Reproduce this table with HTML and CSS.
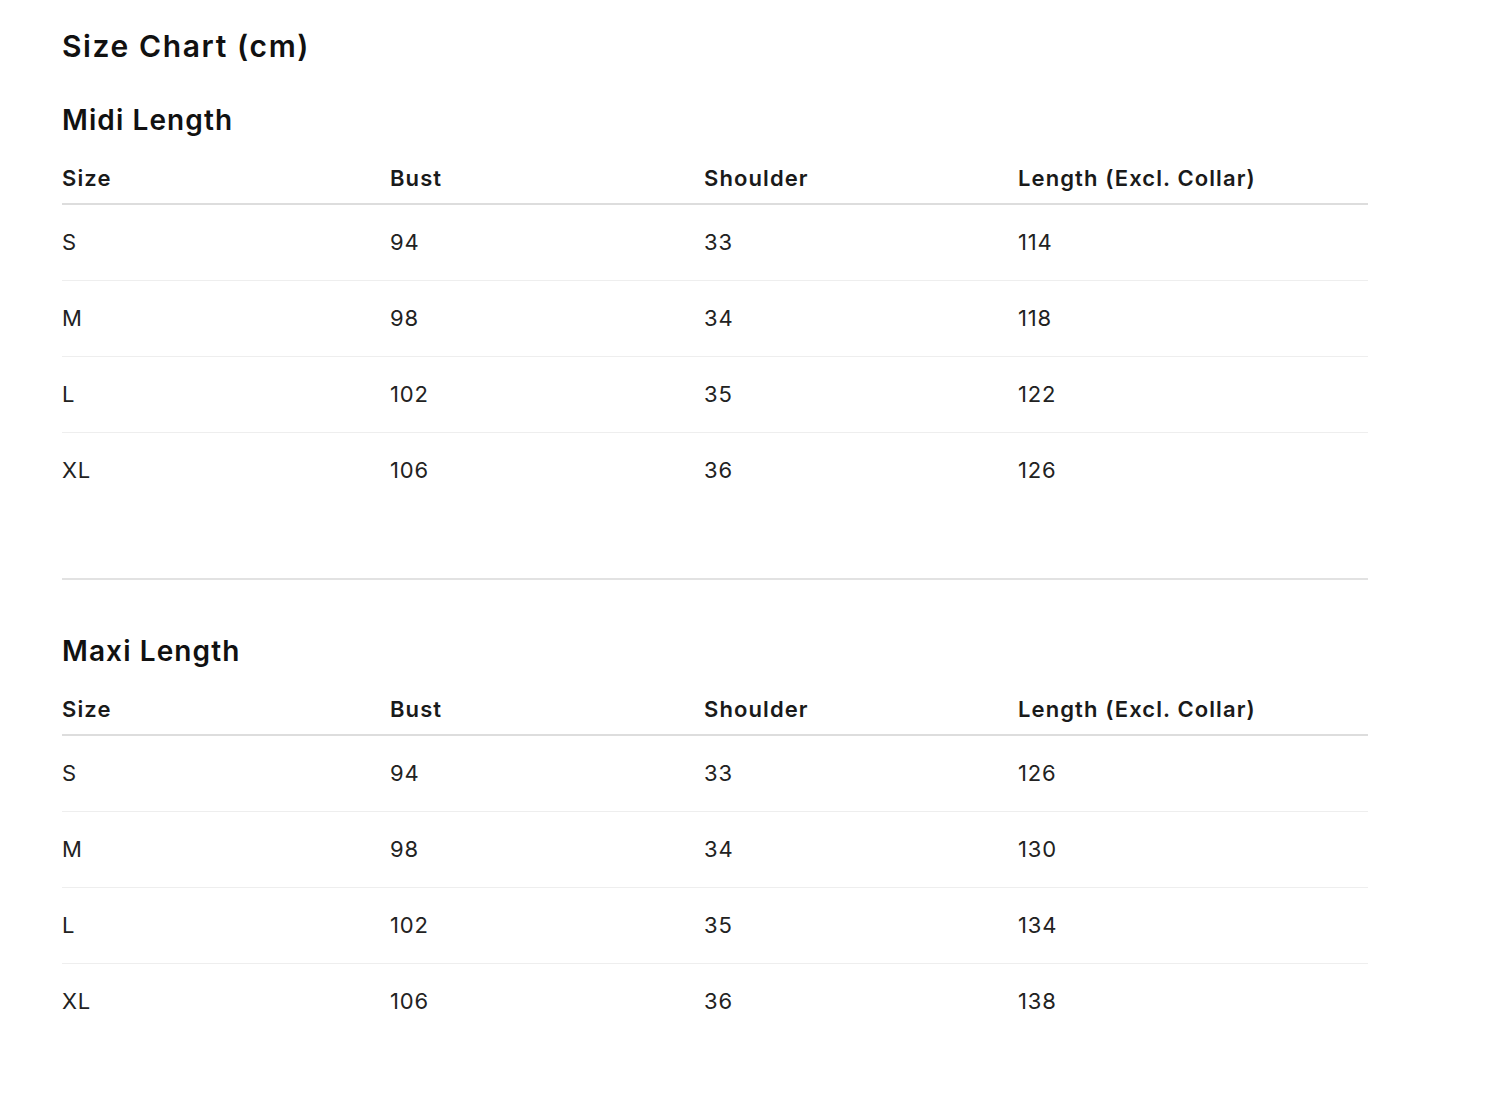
FILE: index.html
```html
<!DOCTYPE html>
<html lang="en">
<head>
<meta charset="utf-8">
<title>Size Chart</title>
<link rel="stylesheet" href="styles.css">
</head>
<body>
<main class="chart">
  <h1 class="title">Size Chart (cm)</h1>

  <section class="section">
    <h2 class="section-title">Midi Length</h2>
    <table class="size-table">
      <colgroup>
        <col class="c1"><col class="c2"><col class="c3"><col class="c4">
      </colgroup>
      <thead>
        <tr><th>Size</th><th>Bust</th><th>Shoulder</th><th>Length (Excl. Collar)</th></tr>
      </thead>
      <tbody>
        <tr><td>S</td><td>94</td><td>33</td><td>114</td></tr>
        <tr><td>M</td><td>98</td><td>34</td><td>118</td></tr>
        <tr><td>L</td><td>102</td><td>35</td><td>122</td></tr>
        <tr><td>XL</td><td>106</td><td>36</td><td>126</td></tr>
      </tbody>
    </table>
  </section>

  <hr class="divider">

  <section class="section">
    <h2 class="section-title">Maxi Length</h2>
    <table class="size-table">
      <colgroup>
        <col class="c1"><col class="c2"><col class="c3"><col class="c4">
      </colgroup>
      <thead>
        <tr><th>Size</th><th>Bust</th><th>Shoulder</th><th>Length (Excl. Collar)</th></tr>
      </thead>
      <tbody>
        <tr><td>S</td><td>94</td><td>33</td><td>126</td></tr>
        <tr><td>M</td><td>98</td><td>34</td><td>130</td></tr>
        <tr><td>L</td><td>102</td><td>35</td><td>134</td></tr>
        <tr><td>XL</td><td>106</td><td>36</td><td>138</td></tr>
      </tbody>
    </table>
  </section>
</main>
</body>
</html>
```

FILE: styles.css
```css
html, body {
  margin: 0;
  padding: 0;
  background: #ffffff;
}

body {
  font-family: Inter, "Noto Sans", "Liberation Sans", sans-serif;
  color: #1a1a1a;
}

.chart {
  width: 1306px;
  padding: 28px 0 40px 62px;
}

.title {
  margin: 0;
  font-size: 30px;
  line-height: 36px;
  font-weight: 600;
  letter-spacing: 1.6px;
  color: #111111;
}

.section-title {
  margin: 0;
  font-size: 28px;
  line-height: 34px;
  font-weight: 600;
  letter-spacing: 1.1px;
  color: #111111;
}

.title + .section {
  margin-top: 39px;
}

.size-table {
  width: 1306px;
  border-collapse: collapse;
  table-layout: fixed;
}

.c1 { width: 328px; }
.c2 { width: 314px; }
.c3 { width: 314px; }
.c4 { width: 350px; }

.size-table th {
  text-align: left;
  font-size: 22px;
  line-height: 30px;
  font-weight: 600;
  letter-spacing: 1.1px;
  color: #1a1a1a;
  padding: 26px 0 10px 0;
  border-bottom: 2px solid #dddddd;
}

.size-table td {
  font-size: 22px;
  line-height: 30px;
  font-weight: 400;
  letter-spacing: 0.8px;
  color: #222222;
  padding: 22px 0 23px 0;
  border-bottom: 1px solid #eeeeee;
}

.size-table tbody tr:last-child td {
  border-bottom: none;
}

.divider {
  margin: 70px 0 54px 0;
  border: none;
  height: 2px;
  background: #e2e2e2;
  width: 1306px;
}
```
